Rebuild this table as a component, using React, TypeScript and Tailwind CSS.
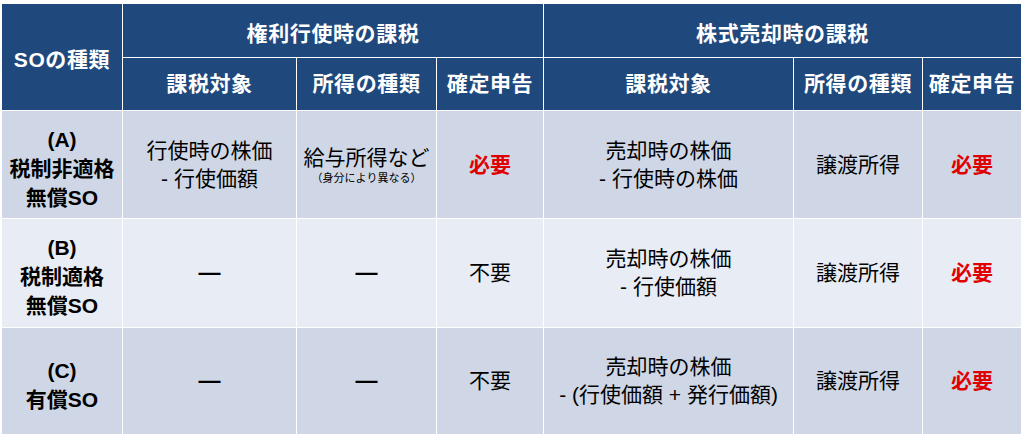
import React from "react";

const font = {
  fontFamily: '"Liberation Sans", "Noto Sans CJK JP", sans-serif',
};

const th = "border border-white bg-[#1f497d] text-white font-bold text-[21px] tracking-[0.6px] text-center align-middle p-0";
const td = "border border-white text-[21px] text-center align-middle p-0 leading-[28px] text-black";

const Red: React.FC = () => (
  <span className="font-bold text-[#e00000]">必要</span>
);

const Dash: React.FC = () => <span className="font-bold text-[22px]">—</span>;

interface RowProps {
  bg: string;
  height: string;
  label: React.ReactNode;
  target: React.ReactNode;
  income: React.ReactNode;
  report: React.ReactNode;
  saleTarget: React.ReactNode;
}

const Row: React.FC<RowProps> = ({ bg, height, label, target, income, report, saleTarget }) => (
  <tr className={`${bg} ${height}`}>
    <td className={`${td} font-bold leading-[29px] pt-[7px]`}>{label}</td>
    <td className={td}>{target}</td>
    <td className={td}>{income}</td>
    <td className={td}>{report}</td>
    <td className={td}>{saleTarget}</td>
    <td className={td}>譲渡所得</td>
    <td className={td}>
      <Red />
    </td>
  </tr>
);

export default function App() {
  return (
    <div className="w-[1024px] h-[438px] bg-white overflow-hidden pt-[3px] pl-[1px]" style={font}>
      <table className="table-fixed border-collapse w-[1020px]">
        <colgroup>
          <col className="w-[121px]" />
          <col className="w-[174px]" />
          <col className="w-[140px]" />
          <col className="w-[107px]" />
          <col className="w-[250px]" />
          <col className="w-[129px]" />
          <col className="w-[99px]" />
        </colgroup>
        <thead>
          <tr className="h-[54px]">
            <th rowSpan={2} className={`${th} pt-[5px]`}>
              SOの種類
            </th>
            <th colSpan={3} className={`${th} pt-[6px]`}>
              権利行使時の課税
            </th>
            <th colSpan={3} className={`${th} pt-[6px]`}>
              株式売却時の課税
            </th>
          </tr>
          <tr className="h-[53px]">
            <th className={th}>課税対象</th>
            <th className={th}>所得の種類</th>
            <th className={th}>確定申告</th>
            <th className={th}>課税対象</th>
            <th className={th}>所得の種類</th>
            <th className={th}>確定申告</th>
          </tr>
        </thead>
        <tbody>
          <Row
            bg="bg-[#cfd7e6]"
            height="h-[108px]"
            label={
              <>
                (A)
                <br />
                税制非適格
                <br />
                無償SO
              </>
            }
            target={
              <>
                行使時の株価
                <br />- 行使価額
              </>
            }
            income={
              <div className="flex flex-col items-center">
                <span className="leading-[26px]">給与所得など</span>
                <span className="text-[11px] leading-[14px]">（身分により異なる）</span>
              </div>
            }
            report={<Red />}
            saleTarget={
              <>
                売却時の株価
                <br />- 行使時の株価
              </>
            }
          />
          <Row
            bg="bg-[#e8ecf4]"
            height="h-[109px]"
            label={
              <>
                (B)
                <br />
                税制適格
                <br />
                無償SO
              </>
            }
            target={<Dash />}
            income={<Dash />}
            report="不要"
            saleTarget={
              <>
                売却時の株価
                <br />- 行使価額
              </>
            }
          />
          <Row
            bg="bg-[#cfd7e6]"
            height="h-[107px]"
            label={
              <>
                (C)
                <br />
                有償SO
              </>
            }
            target={<Dash />}
            income={<Dash />}
            report="不要"
            saleTarget={
              <>
                売却時の株価
                <br />- (行使価額 + 発行価額)
              </>
            }
          />
        </tbody>
      </table>
    </div>
  );
}
